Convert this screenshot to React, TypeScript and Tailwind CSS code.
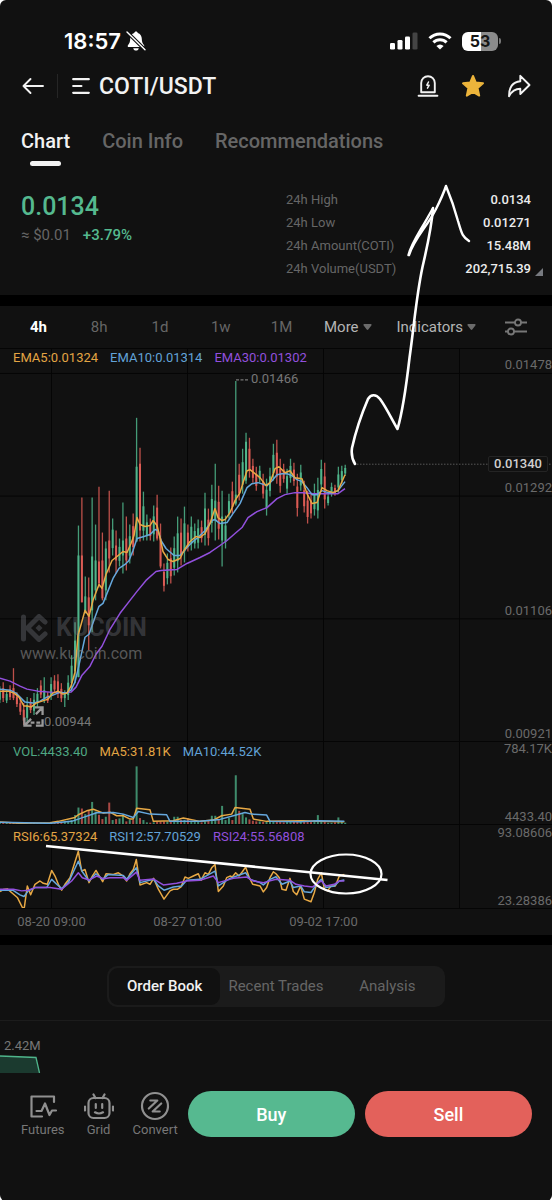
import { useState } from "react";

const TABS = ["Chart", "Coin Info", "Recommendations"];

const STATS = [
  { label: "24h High", value: "0.0134" },
  { label: "24h Low", value: "0.01271" },
  { label: "24h Amount(COTI)", value: "15.48M" },
  { label: "24h Volume(USDT)", value: "202,715.39" },
];

const INTERVALS = ["4h", "8h", "1d", "1w", "1M"];
const FEEDS = ["Order Book", "Recent Trades", "Analysis"];
const GRID_X = [51.5, 187.5, 323.5, 459.5];
const GRID_Y = [372.5, 495.5, 618.5, 741.5];

// [direction, high, low, body top?, body bottom?], one entry per candle
type Candle = [string, number, number, number?, number?];
const CANDLES: Candle[] = [
  ["u", 686, 703], ["d", 682, 702], ["u", 690, 703], ["d", 685, 700], ["d", 668, 700, 688, 698], ["d", 692, 707],
  ["d", 698, 715], ["d", 703, 725], ["u", 697, 723], ["d", 698, 713], ["u", 693, 715], ["u", 688, 707],
  ["d", 680, 698], ["u", 677, 703, 690, 698], ["d", 692, 703], ["u", 677, 700], ["d", 675, 693], ["d", 674, 698],
  ["d", 683, 702], ["u", 690, 707, 692, 698], ["u", 675, 700], ["u", 655, 690], ["u", 622, 683], ["u", 525, 677, 555, 677],
  ["d", 497, 602, 555, 602], ["u", 576, 613, 596, 613], ["d", 577, 650, 597, 625], ["u", 497, 632, 556, 610], ["u", 524, 600, 560, 590], ["d", 486, 587, 561, 583],
  ["d", 532, 600, 560, 598], ["u", 541, 600, 548, 590], ["d", 490, 572, 540, 558], ["u", 518, 555], ["d", 530, 573, 545, 560], ["u", 538, 566],
  ["u", 502, 573, 540, 555], ["d", 516, 570, 538, 560], ["u", 524, 563], ["d", 513, 555], ["u", 417, 541, 466, 541], ["d", 447, 541, 463, 530],
  ["u", 491, 540], ["u", 514, 540], ["d", 518, 540], ["u", 505, 541], ["d", 494, 540, 507, 538], ["d", 523, 568, 538, 566],
  ["d", 563, 591], ["u", 553, 584], ["d", 547, 583], ["u", 536, 575], ["u", 516, 572], ["d", 518, 565],
  ["u", 506, 562], ["d", 524, 551], ["u", 516, 550], ["u", 523, 548], ["u", 519, 548], ["d", 520, 542],
  ["u", 492, 545], ["d", 508, 545], ["u", 484, 532], ["u", 463, 540, 500, 520], ["d", 485, 539], ["u", 490, 566, 516, 540],
  ["u", 515, 548], ["u", 493, 518], ["d", 481, 513], ["u", 380, 505, 494, 503], ["d", 463, 500], ["u", 448, 493],
  ["u", 432, 483, 441, 480], ["d", 437, 477, 448, 470], ["d", 458, 482], ["d", 466, 490], ["u", 465, 482], ["d", 473, 498],
  ["u", 478, 515], ["u", 467, 496], ["u", 443, 480], ["d", 439, 483, 452, 476], ["d", 458, 492], ["d", 463, 482],
  ["u", 468, 493], ["u", 458, 482], ["d", 462, 485], ["d", 473, 516], ["u", 464, 490], ["d", 480, 512],
  ["d", 490, 523], ["d", 492, 518], ["u", 483, 515], ["u", 477, 518], ["u", 459, 490], ["d", 462, 508],
  ["u", 492, 505], ["u", 482, 496], ["d", 484, 495], ["u", 466, 492], ["u", 465, 483], ["u", 464, 475],
];

// Bar heights in thirds of a pixel, aligned with CANDLES
const VOLUMES = [
  3, 4, 3, 3, 4, 3, 4, 5, 5, 4, 3, 3, 4, 4, 3, 5, 4, 6, 6, 8, 10, 12, 27, 50,
  47, 30, 40, 67, 38, 28, 15, 22, 65, 12, 15, 17, 30, 8, 12, 12, 175, 18,
  12, 5, 4, 5, 7, 7, 8, 8, 10, 22, 22, 12, 13, 17, 8, 8, 6, 5,
  8, 12, 25, 25, 12, 55, 12, 18, 12, 148, 40, 30, 20, 14, 10, 8, 8, 6,
  8, 6, 8, 6, 6, 5, 6, 6, 8, 10, 12, 12, 8, 6, 12, 27, 10, 6, 4, 4, 5, 20, 8, 4,
];

const EMA5 =
  "0,691 8,691 14,693 19,697 24,706 27,706 31,707 36,703 42,701 48,699 53,693 58,691 63,694 67,693 71,686 75,672 78,635 82,621 85,610 89,616 93,600 99,584 102,588 106,574 112,560 117,556 123,551 127,552 131,543 134,535 137,517 140,524 145,526 150,525 153,520 157,525 160,537 163,551 168,559 173,561 180,558 184,550 190,541 196,536 200,537 205,533 210,523 215,508 218,517 222,520 225,519 230,512 235,500 240,492 243,482 247,470 250,469 255,473 260,477 266,485 270,482 275,468 279,466 285,472 290,470 295,477 302,478 307,493 312,503 317,502 322,487 327,490 333,492 338,490 345,474";
const EMA10 =
  "0,689 10,690 16,693 22,699 25,702 33,703 40,701 47,697 53,695 60,692 66,693 71,690 75,682 79,665 85,637 89,634 95,617 99,606 103,603 107,593 113,578 119,568 125,564 129,560 133,550 137,538 144,536 150,534 155,529 158,530 161,540 166,548 174,555 180,555 187,547 193,541 198,537 205,530 212,520 215,519 220,523 227,522 233,513 240,503 247,487 252,483 258,482 267,485 272,480 277,474 282,473 287,473 292,475 297,479 302,481 307,487 312,494 317,494 322,490 328,492 333,492 338,490 345,481";
const EMA30 =
  "0,678 10,681 20,686 27,689 38,691 50,692 63,693 71,692 76,687 82,675 90,666 96,654 102,646 110,629 120,613 130,600 137,591 146,580 156,571 161,570 177,569 187,563 200,557 210,552 220,545 227,540 235,533 242,527 248,517 257,511 267,507 277,498 285,494 295,492 303,492 313,493 325,493 338,493 345,488";

const VOL_MA5 =
  "0,264 60,268 150,266 175,262 225,250 235,242 260,230 280,225 310,237 330,234 350,245 370,245 390,255 400,255 410,222 450,227 460,262 520,260 550,252 600,262 640,258 665,245 695,240 705,220 750,225 760,255 800,262 908,260 952,262 1033,263";
const VOL_MA10 =
  "0,265 150,268 215,262 250,250 290,236 340,235 370,240 400,250 415,232 450,240 500,242 510,262 600,262 660,256 700,245 735,235 755,240 800,243 810,262 900,263 952,260 1033,262";

const RSI6 =
  "0,472 10,466 22,464 38,478 52,490 68,522 73,520 82,455 92,482 105,450 120,440 130,447 142,450 155,408 165,425 175,450 185,468 195,450 210,430 235,350 245,410 255,405 267,445 277,425 288,408 298,425 308,442 318,418 340,420 355,415 370,425 380,440 390,418 400,405 409,375 420,452 440,445 450,450 461,432 475,465 492,495 510,470 520,465 533,465 543,458 555,428 565,432 580,425 595,418 603,438 615,415 625,420 635,400 645,390 655,472 670,455 680,430 690,425 697,428 707,415 717,425 727,412 737,398 748,430 758,450 780,455 790,473 800,460 810,430 820,412 828,418 838,430 846,465 858,468 870,432 880,472 890,482 902,455 913,495 933,503 943,475 953,435 964,415 973,465 983,470 993,455 1006,455 1018,425 1033,420";
const RSI12 =
  "0,468 38,468 60,482 72,487 85,470 105,460 140,460 155,435 170,450 185,463 205,445 235,380 247,412 267,440 288,418 308,435 325,420 370,423 380,435 409,400 420,445 461,435 475,455 492,468 520,458 545,455 560,438 600,435 645,410 655,455 690,432 737,415 750,435 780,445 790,452 810,435 828,427 846,450 870,440 880,460 902,455 913,473 933,475 953,445 964,435 978,460 1003,455 1018,440 1033,437";
const RSI24 =
  "0,465 40,465 65,470 85,468 105,460 150,460 185,465 215,440 235,415 247,430 267,437 290,425 310,433 330,430 370,430 380,438 409,413 420,438 461,434 490,452 530,447 560,440 600,438 640,425 655,445 700,432 740,428 760,440 790,445 828,435 870,438 888,450 913,455 938,458 964,440 978,455 1003,450 1018,440 1033,440";

const UP = "#4fb58b";
const DOWN = "#dd5c55";
const ORANGE = "#e8a945";
const BLUE = "#66a8dd";
const PURPLE = "#9250dd";
const GRID = "#050505";

const candleX = (i: number) => 3.42 * i - 0.2;

function Line({ points, color }: { points: string; color: string }) {
  return (
    <polyline
      points={points}
      fill="none"
      stroke={color}
      strokeWidth="1.5"
      strokeLinejoin="round"
      vectorEffect="non-scaling-stroke"
    />
  );
}

function GridColumns({ scale = 1 }: { scale?: number }) {
  return (
    <>
      {GRID_X.map(x => (
        <line key={x} x1={x * scale} x2={x * scale} y1="0" y2="1000" stroke={GRID} strokeWidth="1" vectorEffect="non-scaling-stroke" />
      ))}
    </>
  );
}

function Caret() {
  return (
    <svg viewBox="0 0 10 7" className="w-[9px] h-[6px]" fill="#6b6b6b">
      <path d="M1.200 0h7.600c.9 0 1.300 1 .7 1.700L5.900 6.400a1.200 1.200 0 0 1-1.800 0L.5 1.700C-.1 1 .3 0 1.200 0z" />
    </svg>
  );
}

function StatusBar() {
  return (
    <div className="flex items-center justify-between h-[63px] pl-16 pr-[51px] pt-[19px]">
      <div className="flex items-center gap-[5px]">
        <span className="font-[Inter,sans-serif] font-semibold text-[22px] leading-6 text-white">18:57</span>
        <svg viewBox="0 0 20 22" className="w-5 h-[22px]">
          <path d="M10 1.500c-.9 0-1.600.6-1.700 1.400C5.600 3.700 4.200 6 4.200 8.800c0 3.200-.8 4.700-2.100 6.100-.8.900-.4 2.100.8 2.100h14.200c1.200 0 1.600-1.200.8-2.100-1.300-1.400-2.100-2.900-2.100-6.100 0-2.800-1.400-5.100-4.100-5.900C11.600 2.100 10.900 1.500 10 1.500z" fill="#fff" />
          <path d="M7.200 18.300h5.600c-.3 1.400-1.400 2.300-2.800 2.300s-2.500-.9-2.800-2.300z" fill="#fff" />
          <path d="M1 2l18 17.800" stroke="#111" strokeWidth="3.600" />
          <path d="M1 2l18 17.800" stroke="#fff" strokeWidth="1.400" strokeLinecap="round" />
        </svg>
      </div>
      <div className="flex items-center gap-[10px]">
        <svg viewBox="0 0 28 18" className="w-7 h-[18px]" fill="#fff">
          <rect x="0" y="11" width="5" height="6.500" rx="1.300" />
          <rect x="7.500" y="8" width="5" height="9.500" rx="1.300" />
          <rect x="15" y="4.500" width="5" height="13" rx="1.300" />
          <rect x="22.500" y="0.500" width="5" height="17" rx="1.300" fill="#444" />
        </svg>
        <svg viewBox="0 0 24 18" className="w-6 h-[18px]" fill="none" stroke="#fff" strokeWidth="3">
          <path d="M1.500 6.200a15 15 0 0 1 21 0" />
          <path d="M5.400 10.400a9.400 9.400 0 0 1 13.200 0" />
          <path d="M12 17.600L8.400 14a5 5 0 0 1 7.200 0z" fill="#fff" stroke="none" />
        </svg>
        <div className="flex items-center gap-px">
          <span className="flex items-center justify-center w-9 h-[19px] rounded-[6px] bg-linear-to-r from-white from-53% to-[#8b8b8b] to-53% font-[Inter,sans-serif] font-bold text-base leading-5 text-[#161616]">
            53
          </span>
          <span className="w-[2px] h-[6px] rounded-r-full bg-[#777]" />
        </div>
      </div>
    </div>
  );
}

function Header() {
  return (
    <header className="flex items-center h-[46px] pl-[21px] pr-[21px]">
      <button aria-label="Back">
        <svg viewBox="0 0 24 20" className="w-6 h-5" fill="none" stroke="#f2f2f2" strokeWidth="1.900" strokeLinecap="round" strokeLinejoin="round">
          <path d="M22 10H2.500M9.500 3L2.500 10l7 7" />
        </svg>
      </button>
      <span className="w-px h-6 ml-3 bg-[#262626]" />
      <button className="flex items-center gap-[9px] ml-[14px]">
        <svg viewBox="0 0 18 18" className="w-[18px] h-[18px]" stroke="#f2f2f2" strokeWidth="2.200" strokeLinecap="round">
          <path d="M1.200 2.200h15.600M1.200 9h8.200M1.200 15.800h15.600" />
        </svg>
        <h1 className="pt-px text-[23px] leading-7 font-medium text-[#f2f2f2]">COTI/USDT</h1>
      </button>
      <div className="flex items-center gap-[22px] ml-auto">
        <button aria-label="Price alert">
          <svg viewBox="0 0 22 24" className="w-[22px] h-6" fill="none" stroke="#f2f2f2" strokeWidth="1.900" strokeLinecap="round" strokeLinejoin="round">
            <path d="M4.200 18.200V9a6.800 6.800 0 0 1 13.600 0v9.200z" />
            <path d="M1.600 21.700h18.800" />
            <path d="M11.500 8L9.800 11.200h2.400L10.500 14.200" strokeWidth="1.500" />
          </svg>
        </button>
        <button aria-label="Favourite">
          <svg viewBox="0 0 24 24" className="w-6 h-6" fill="#ecb43b" stroke="#ecb43b" strokeWidth="2" strokeLinejoin="round">
            <path d="M12 2l2.800 6.600 7.200.7-5.400 4.800 1.600 7.500-6.200-3.700-6.200 3.700 1.600-7.500L2 9.300l7.200-.7z" />
          </svg>
        </button>
        <button aria-label="Share">
          <svg viewBox="0 0 24 24" className="w-6 h-6" fill="none" stroke="#f2f2f2" strokeWidth="1.900" strokeLinejoin="round">
            <path d="M13.300 1.800L22.500 11l-9.200 9v-5.200c-5.400 0-8.300 1.900-11.300 7.400C2 13.300 5.600 8 13.300 7.200z" />
          </svg>
        </button>
      </div>
    </header>
  );
}

function PriceSummary() {
  return (
    <section className="flex justify-between pl-[21px] pr-[21px] pt-[22px] pb-[15px]">
      <div className="pt-[3px]">
        <p className="text-[25px] leading-8 font-medium text-[#55b98f]">0.0134</p>
        <p className="mt-[2px] text-[15px] leading-5 text-[#666]">
          ≈ $0.01<span className="ml-3 font-medium text-[#55b98f]">+3.79%</span>
        </p>
      </div>
      <dl className="relative w-[245px] text-[13px] leading-[23px]">
        {STATS.map(({ label, value }) => (
          <div key={label} className="flex justify-between">
            <dt className="text-[#666]">{label}</dt>
            <dd className="font-medium text-[#ececec]">{value}</dd>
          </div>
        ))}
        <svg viewBox="0 0 8 8" className="absolute -right-3 bottom-1 w-2 h-2" fill="#777a80">
          <path d="M8 0v8H0z" />
        </svg>
      </dl>
    </section>
  );
}

function IntervalBar() {
  const [active, setActive] = useState("4h");
  return (
    <div className="flex items-center h-[42px] pb-px pl-2 text-[15px] leading-5">
      {INTERVALS.map(t => (
        <button key={t} onClick={() => setActive(t)} className={`flex-1 ${t === active ? "font-bold text-white" : "text-[#666]"}`}>
          {t}
        </button>
      ))}
      <div className="flex items-center justify-between w-[240px] pl-3 pr-[25px] text-[#b5b5b5]">
        <button className="flex items-center gap-1">More <Caret /></button>
        <button className="flex items-center gap-1">Indicators <Caret /></button>
        <button aria-label="Chart settings" className="ml-1">
          <svg viewBox="0 0 22 18" className="w-[22px] h-[18px]" fill="none" stroke="#777" strokeWidth="1.800">
            <path d="M0 4.500h10M16 4.500h6M0 13.500h3M9 13.500h13" />
            <circle cx="13" cy="4.500" r="3" />
            <circle cx="6" cy="13.500" r="3" />
          </svg>
        </button>
      </div>
    </div>
  );
}

function PricePane() {
  return (
    <div className="relative h-[394px] border-t border-[#050505]">
      <svg viewBox="0 348 552 394" preserveAspectRatio="none" className="absolute inset-0 w-full h-full">
        <GridColumns />
        {GRID_Y.map(y => (
          <line key={y} x1="0" x2="552" y1={y} y2={y} stroke={GRID} strokeWidth="1" />
        ))}
        <path d="M357 463.500H552" stroke="#555" strokeWidth="1" strokeDasharray="1.500 1.500" />
        {CANDLES.map(([dir, high, low, top, bottom], i) => {
          const x = candleX(i);
          const bodyTop = top ?? high + (low - high) * 0.3;
          const bodyBottom = bottom ?? low - (low - high) * 0.2;
          return (
            <g key={i} stroke={dir === "u" ? UP : DOWN}>
              <line x1={x} x2={x} y1={high} y2={low} strokeWidth="1.300" opacity="0.85" />
              <line x1={x} x2={x} y1={bodyTop} y2={bodyBottom} strokeWidth="2" />
            </g>
          );
        })}
        <Line points={EMA30} color={PURPLE} />
        <Line points={EMA10} color={BLUE} />
        <Line points={EMA5} color={ORANGE} />
        <path d="M236 379h12" stroke="#777" strokeWidth="1.200" strokeDasharray="3 1.500" />
      </svg>

      {/* price scale */}
      <ul className="relative text-right text-[13px] leading-4 text-[#6a6a6a]">
        <li className="flex items-end justify-end h-6">0.01478</li>
        <li className="flex items-end justify-end h-[123px]">0.01292</li>
        <li className="flex items-end justify-end h-[123px]">0.01106</li>
        <li className="flex items-end justify-end h-[123px]">0.00921</li>
      </ul>

      <div className="absolute top-px left-[13px] flex gap-3 text-[13px] leading-4">
        <span className="text-[#e3a544]">EMA5:0.01324</span>
        <span className="text-[#62a3d8]">EMA10:0.01314</span>
        <span className="text-[#9250dd]">EMA30:0.01302</span>
      </div>
      <span className="absolute top-[22px] left-[251px] text-[13px] leading-4 text-[#777]">0.01466</span>
      <span className="absolute top-[107px] right-1 px-[5px] rounded-[2px] border border-[#242424] bg-[#111] text-[13px] leading-[14px] font-medium text-[#d0d0d0]">
        0.01340
      </span>

      {/* watermark */}
      <div className="absolute top-[265px] left-5 text-[#8a8f99]/30">
        <div className="flex items-center gap-2">
          <svg viewBox="0 0 28 28" className="w-7 h-7" fill="none" stroke="currentColor" strokeWidth="5" strokeLinejoin="round">
            <path d="M3.500 3v22M25 8l-6-5.500L7.500 14 19 25.500l6-5.500" strokeLinecap="round" />
            <path d="M19 10.500l3.500 3.500-3.500 3.500-3.500-3.500z" fill="currentColor" stroke="none" />
          </svg>
          <span className="text-[25px] leading-7 font-bold">KUCOIN</span>
        </div>
        <p className="text-base leading-6 text-[#888]/60">www.kucoin.com</p>
      </div>
      <div className="absolute top-[357px] left-[23px] flex items-end text-[13px] leading-[10px] text-[#777]">
        <svg viewBox="0 0 22 22" className="w-[21px] h-[21px]" fill="none" stroke="#9a9a9a" strokeWidth="2.400">
          <path d="M12.500 1.500h8v8M20 2l-6.500 6.500M1.500 12v8.500H9M2 20l6.500-6.500M20.500 14v6.500h-7M8 17.500h4M14 17.500h4" />
        </svg>
        0.00944
      </div>
    </div>
  );
}

function VolumePane() {
  return (
    <div className="relative h-[83px] border-b border-[#050505]">
      <svg viewBox="0 21 1656 249" preserveAspectRatio="none" className="absolute inset-0 w-full h-full">
        <GridColumns scale={3} />
        {VOLUMES.map((v, i) => (
          <rect key={i} x={candleX(i) * 3 - 3} y={270 - v} width="6" height={v} fill={CANDLES[i][0] === "u" ? UP : DOWN} opacity="0.75" />
        ))}
        <Line points={VOL_MA5} color={ORANGE} />
        <Line points={VOL_MA10} color={BLUE} />
      </svg>
      <div className="relative flex gap-3 pl-[13px] pt-[2px] text-[13px] leading-4">
        <span className="text-[#4fa883]">VOL:4433.40</span>
        <span className="text-[#e3a544]">MA5:31.81K</span>
        <span className="text-[#62a3d8]">MA10:44.52K</span>
      </div>
      <div className="absolute inset-x-0 -inset-y-px flex flex-col items-end justify-between text-[13px] leading-4 text-[#6a6a6a]">
        <span>784.17K</span>
        <span>4433.40</span>
      </div>
    </div>
  );
}

function RsiPane() {
  return (
    <div className="relative h-[84px] border-b border-[#050505]">
      <svg viewBox="0 270 1656 252" preserveAspectRatio="none" className="absolute inset-0 w-full h-full">
        <GridColumns scale={3} />
        <Line points={RSI6} color={ORANGE} />
        <Line points={RSI12} color={BLUE} />
        <Line points={RSI24} color={PURPLE} />
      </svg>
      <div className="relative flex gap-3 pl-[13px] pt-1 text-[13px] leading-4">
        <span className="text-[#e3a544]">RSI6:65.37324</span>
        <span className="text-[#62a3d8]">RSI12:57.70529</span>
        <span className="text-[#9250dd]">RSI24:55.56808</span>
      </div>
      <div className="absolute inset-x-0 top-0 -bottom-px flex flex-col items-end justify-between text-[13px] leading-4 text-[#6a6a6a]">
        <span>93.08606</span>
        <span>23.28386</span>
      </div>
    </div>
  );
}

// Hand-drawn projection and RSI divergence marks
function Annotations() {
  return (
    <svg viewBox="0 166 552 769" preserveAspectRatio="none" className="absolute inset-0 w-full h-full pointer-events-none" fill="none" stroke="#fff" strokeLinecap="round" strokeLinejoin="round">
      <path d="M355 464c-3-5-4-9-3-16 4-18 10-35 16-49 3-5 8-5 12 0 6 8 11 19 17.500 30 5-17 9-45 12-71 5-36 7-63 13-91 5-22 9-38 10.500-59" strokeWidth="2.600" />
      <path d="M408.500 255c3-12 9-19 24-46M409 255c6-18 18-28 27-46 4-8 7-14 10-23 5 12 9 24 12 35 4 13 4 15 11 20" strokeWidth="2.400" />
      <path d="M46 846L387.500 880" strokeWidth="2.600" strokeLinecap="butt" />
      <ellipse cx="346" cy="874" rx="35.500" ry="19.500" strokeWidth="2.200" />
    </svg>
  );
}

function BottomBar() {
  return (
    <footer className="flex pl-[21px] pr-5 pt-[18px] pb-[62px]">
      <nav className="flex gap-[19px] text-[13px] leading-[18px] text-[#777]">
        <a href="#futures" className="flex flex-col items-center">
          <svg viewBox="0 0 30 30" className="w-[30px] h-[30px]" fill="none" stroke="#909090" strokeWidth="2.200" strokeLinecap="round" strokeLinejoin="round">
            <path d="M26 11V5.500H3.500v20H14" />
            <path d="M8.500 20h5l3.500-7.500 4.500 11.500 2.500-4.500h4" />
          </svg>
          Futures
        </a>
        <a href="#grid" className="flex flex-col items-center">
          <svg viewBox="0 0 30 30" className="w-[30px] h-[30px]" fill="none" stroke="#909090" strokeWidth="2.200" strokeLinecap="round" strokeLinejoin="round">
            <rect x="4.500" y="7" width="21" height="20" rx="5" />
            <path d="M11.500 7L9.500 3.500M18.500 7l2-3.500M1 15.500v4M29 15.500v4M11.800 13v4M18.200 13v4M11 21.300c2.500 1.500 5.500 1.500 8 0" />
          </svg>
          Grid
        </a>
        <a href="#convert" className="flex flex-col items-center">
          <svg viewBox="0 0 30 30" className="w-[30px] h-[30px]" fill="none" stroke="#909090" strokeWidth="2.200" strokeLinecap="round" strokeLinejoin="round">
            <circle cx="15" cy="15" r="13" />
            <path d="M10.300 9.500h7L8.800 17.500M21.200 12.500l-8.500 8h7" />
          </svg>
          Convert
        </a>
      </nav>
      <div className="flex flex-1 gap-[10px] ml-[10px] text-[18px] font-medium text-white">
        <button className="flex-1 h-[46px] rounded-full bg-[#56b990]">Buy</button>
        <button className="flex-1 h-[46px] rounded-full bg-[#e3615b]">Sell</button>
      </div>
    </footer>
  );
}

export default function App() {
  const [tab, setTab] = useState("Chart");
  const [feed, setFeed] = useState("Order Book");

  return (
    <div className="bg-white">
      <main className="w-full overflow-hidden rounded-[6px] bg-[#111] font-[Roboto,sans-serif]">
        <StatusBar />
        <Header />
        <nav className="flex items-start gap-8 pl-[21px] pt-[18px] text-[20px] leading-7 font-medium">
          {TABS.map(t => (
            <button key={t} onClick={() => setTab(t)} className={`flex flex-col items-center gap-[6px] ${t === tab ? "text-[#f2f2f2]" : "text-[#666]"}`}>
              {t}
              <span className={`w-[31px] h-[5px] rounded-full ${t === tab ? "bg-[#f2f2f2]" : ""}`} />
            </button>
          ))}
        </nav>

        <div className="relative">
          <PriceSummary />
          <div className="h-[11px] bg-black" />
          <IntervalBar />
          <PricePane />
          <VolumePane />
          <RsiPane />
          <div className="flex gap-[33px] text-center text-[13px] leading-[26px] text-[#6a6a6a]">
            <span className="w-[103px]">08-20 09:00</span>
            <span className="w-[103px]">08-27 01:00</span>
            <span className="w-[103px]">09-02 17:00</span>
          </div>
          <Annotations />
        </div>

        <div className="h-[10px] bg-black" />
        <div className="pt-[21px] pb-[13px] border-b border-[#1c1c1c]">
          <div className="grid grid-cols-3 w-[338px] h-[41px] p-[2px] mx-auto rounded-[10px] bg-[#1b1b1b] text-[15px]">
            {FEEDS.map(f => (
              <button key={f} onClick={() => setFeed(f)} className={`rounded-[9px] ${f === feed ? "bg-[#111] font-medium text-[#f2f2f2]" : "text-[#666]"}`}>
                {f}
              </button>
            ))}
          </div>
        </div>

        <div className="h-[52px] pt-4">
          <p className="pl-1 text-[13px] leading-[18px] text-[#777]">2.42M</p>
          <svg viewBox="0 0 42 18" className="w-[42px] h-[18px]">
            <path d="M0 1l36 1.500L39.500 18H0z" fill="#1b3a2f" />
            <path d="M0 1l36 1.500L39.500 18" fill="none" stroke="#4fb58b" strokeWidth="1.300" />
          </svg>
        </div>
        <BottomBar />
      </main>
    </div>
  );
}
